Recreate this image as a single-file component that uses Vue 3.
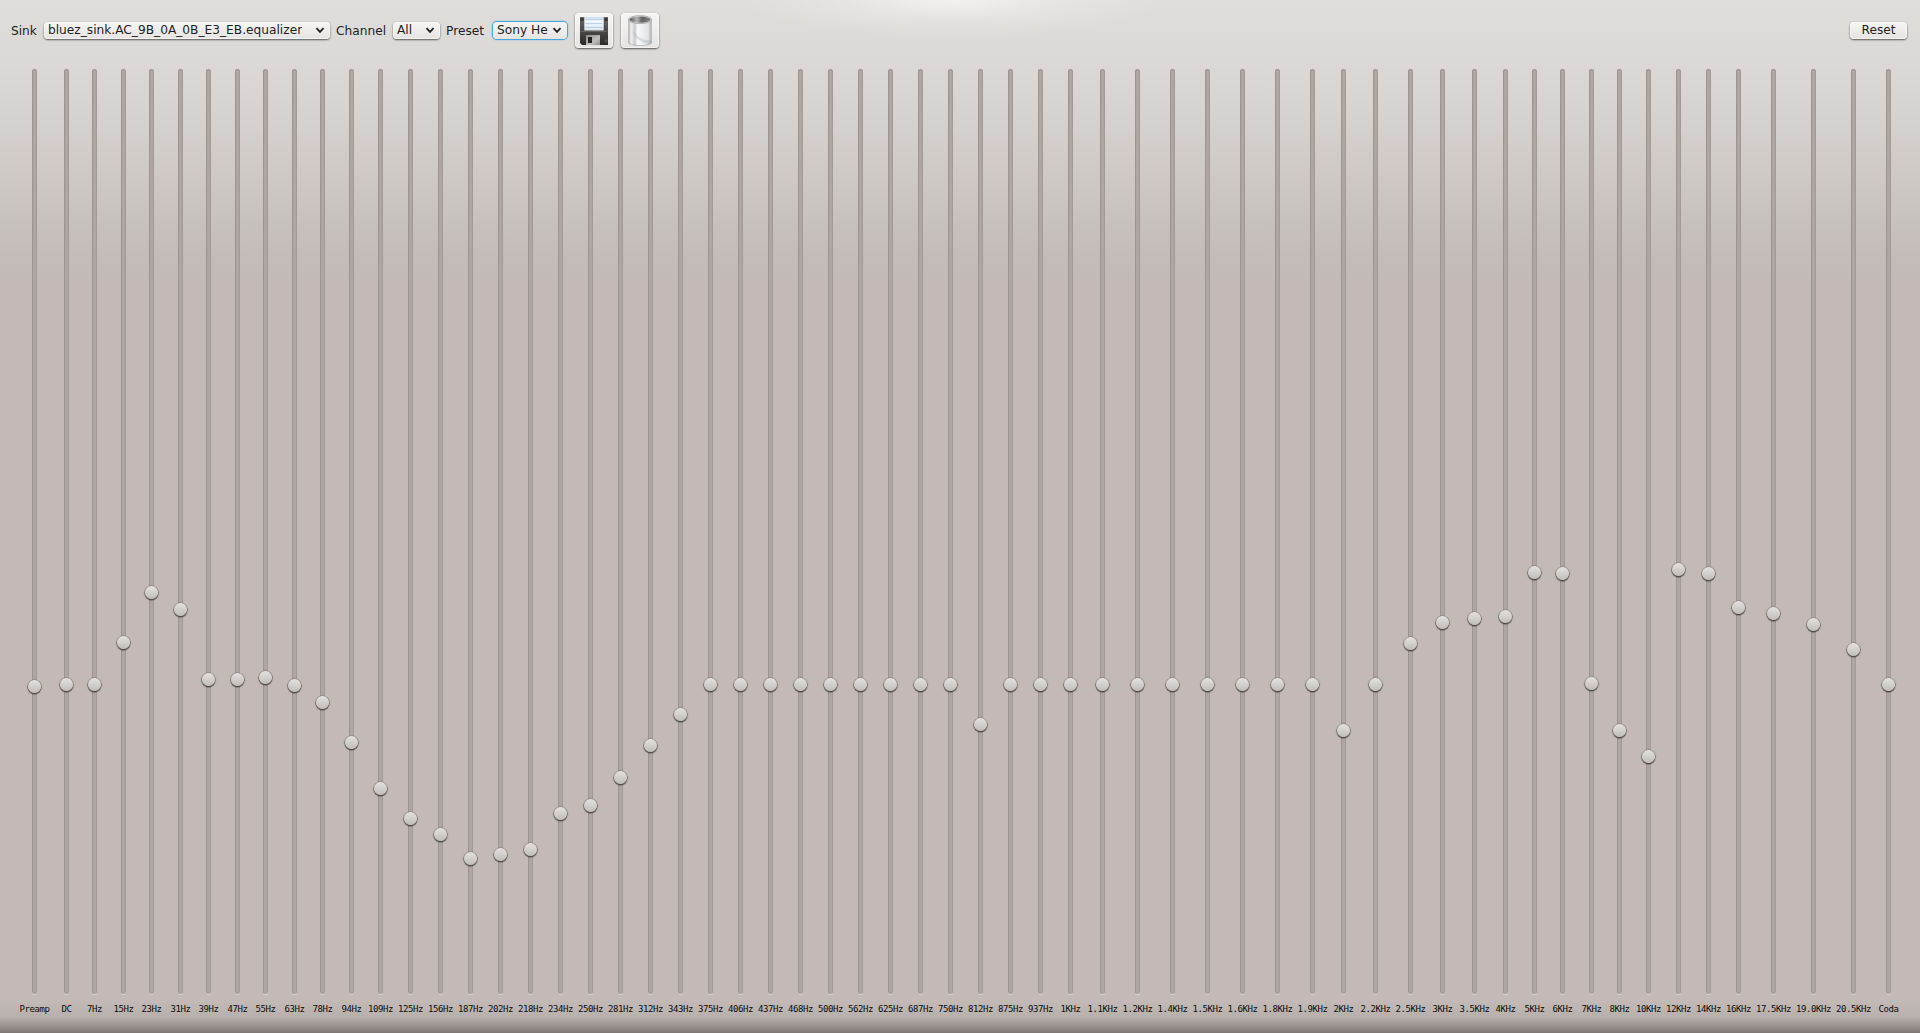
<script setup>
import { computed, ref } from 'vue'

const sink = ref('bluez_sink.AC_9B_0A_0B_E3_EB.equalizer')
const channel = ref('All')
const preset = ref('Sony He')

// label, x of the slider, offset of the knob from the top of the track
const bands = ref([
  ['Preamp', 34, 617], ['DC', 66, 615], ['7Hz', 94, 615], ['15Hz', 123, 573],
  ['23Hz', 151, 523], ['31Hz', 180, 540], ['39Hz', 208, 610], ['47Hz', 237, 610],
  ['55Hz', 265, 608], ['63Hz', 294, 616], ['78Hz', 322, 633], ['94Hz', 351, 673],
  ['109Hz', 380, 719], ['125Hz', 410, 749], ['156Hz', 440, 765], ['187Hz', 470, 789],
  ['202Hz', 500, 785], ['218Hz', 530, 780], ['234Hz', 560, 744], ['250Hz', 590, 736],
  ['281Hz', 620, 708], ['312Hz', 650, 676], ['343Hz', 680, 645], ['375Hz', 710, 615],
  ['406Hz', 740, 615], ['437Hz', 770, 615], ['468Hz', 800, 615], ['500Hz', 830, 615],
  ['562Hz', 860, 615], ['625Hz', 890, 615], ['687Hz', 920, 615], ['750Hz', 950, 615],
  ['812Hz', 980, 655], ['875Hz', 1010, 615], ['937Hz', 1040, 615], ['1KHz', 1070, 615],
  ['1.1KHz', 1102, 615], ['1.2KHz', 1137, 615], ['1.4KHz', 1172, 615], ['1.5KHz', 1207, 615],
  ['1.6KHz', 1242, 615], ['1.8KHz', 1277, 615], ['1.9KHz', 1312, 615], ['2KHz', 1343, 661],
  ['2.2KHz', 1375, 615], ['2.5KHz', 1410, 574], ['3KHz', 1442, 553], ['3.5KHz', 1474, 549],
  ['4KHz', 1505, 547], ['5KHz', 1534, 503], ['6KHz', 1562, 504], ['7KHz', 1591, 614],
  ['8KHz', 1619, 661], ['10KHz', 1648, 687], ['12KHz', 1678, 500], ['14KHz', 1708, 504],
  ['16KHz', 1738, 538], ['17.5KHz', 1773, 544], ['19.0KHz', 1813, 555], ['20.5KHz', 1853, 580],
  ['Coda', 1888, 615]
])

const sliders = computed(() => bands.value.map(([label, x, level], i) => ({
  label,
  level,
  gap: x - (i ? bands.value[i - 1][1] + 5 : 2)
})))

function reset() {
  bands.value = bands.value.map(([label, x]) => [label, x, 615])
}
</script>

<template>
  <div class="window">
    <div class="toolbar">
      <span class="caption sink-caption">Sink</span>
      <div class="combo sink">
        <span class="value">{{ sink }}</span>
        <svg class="arrow" viewBox="0 0 10 7"><path d="M1.5 1.2 5 4.9 8.5 1.2" /></svg>
      </div>
      <span class="caption channel-caption">Channel</span>
      <div class="combo channel">
        <span class="value">{{ channel }}</span>
        <svg class="arrow" viewBox="0 0 10 7"><path d="M1.5 1.2 5 4.9 8.5 1.2" /></svg>
      </div>
      <span class="caption preset-caption">Preset</span>
      <div class="combo preset">
        <span class="value">{{ preset }}</span>
        <svg class="arrow" viewBox="0 0 10 7"><path d="M1.5 1.2 5 4.9 8.5 1.2" /></svg>
      </div>
      <button class="tool save">
        <svg width="32" height="32" viewBox="0 0 32 32">
          <defs>
            <linearGradient id="disk" x1="0" y1="0" x2="0" y2="1">
              <stop offset="0" stop-color="#6b6867" />
              <stop offset="0.5" stop-color="#4a4747" />
              <stop offset="1" stop-color="#2b2929" />
            </linearGradient>
            <linearGradient id="paper" x1="0" y1="0" x2="0" y2="1">
              <stop offset="0" stop-color="#c9dcf0" />
              <stop offset="0.3" stop-color="#f2f7fc" />
              <stop offset="1" stop-color="#dbe7f3" />
            </linearGradient>
            <linearGradient id="shutter" x1="0" y1="0" x2="1" y2="1">
              <stop offset="0" stop-color="#8b8988" />
              <stop offset="0.6" stop-color="#c2c0bf" />
              <stop offset="1" stop-color="#8d8b8a" />
            </linearGradient>
          </defs>
          <path d="M2 2h28v28H4l-2-2z" fill="url(#disk)" />
          <path d="M2.5 3h3v3h-3zM26.5 3h3v3h-3z" fill="#383535" />
          <path d="M6.3 2h19.4v13.5H6.3z" fill="url(#paper)" />
          <path d="M7.5 4.5h17M7.5 8.5h17M7.5 12.5h17" stroke="#b2c8df" stroke-width="0.8" />
          <path d="M2.5 16.5h27" stroke="#777472" stroke-width="0.6" />
          <path d="M8 20h14v10H8z" fill="url(#shutter)" />
          <path d="M10 22h4v6h-4z" fill="#242222" />
          <circle cx="28" cy="26" r="1.2" fill="none" stroke="#6b6867" stroke-width="0.6" />
        </svg>
      </button>
      <button class="tool remove">
        <svg width="32" height="32" viewBox="0 0 32 32">
          <defs>
            <linearGradient id="can">
              <stop offset="0" stop-color="#a5a7aa" />
              <stop offset="0.12" stop-color="#f0f1f2" />
              <stop offset="0.28" stop-color="#c9cbce" />
              <stop offset="0.4" stop-color="#f7f8f9" />
              <stop offset="0.85" stop-color="#e2e4e6" />
              <stop offset="1" stop-color="#a7a9ac" />
            </linearGradient>
            <linearGradient id="hole">
              <stop offset="0" stop-color="#555" />
              <stop offset="0.35" stop-color="#b5b5b5" />
              <stop offset="0.6" stop-color="#626262" />
              <stop offset="1" stop-color="#858585" />
            </linearGradient>
          </defs>
          <path d="M4.3 4.5v23c0 5 23.400 5 23.400 0v-23z" fill="url(#can)" />
          <path d="M8 15c3 9 9 12 17 14 2-.8 2.700-1.300 2.700-2V25c-8 1-14-2-19.700-10z" fill="#8c9196" opacity="0.25" />
          <path d="M4.300 26.500c0 5.500 23.400 5.500 23.400 0" fill="none" stroke="#aaa" stroke-width="0.7" />
          <ellipse cx="16" cy="4.600" rx="11.700" ry="4" fill="#dcdddd" stroke="#8d8e8f" stroke-width="0.6" />
          <ellipse cx="16" cy="4.600" rx="10.600" ry="3.100" fill="url(#hole)" />
        </svg>
      </button>
      <button class="reset" @click="reset">Reset</button>
    </div>

    <div class="sliders">
      <div v-for="s in sliders" :key="s.label" class="band" :style="{ marginLeft: s.gap + 'px' }">
        <div class="track">
          <div class="knob" :style="{ top: s.level + 'px' }"></div>
        </div>
        <span class="label">{{ s.label }}</span>
      </div>
    </div>
  </div>
</template>

<style>
body {
  margin: 0;
  overflow: hidden;
}
</style>

<style scoped>
.window {
  display: flex;
  flex-direction: column;
  width: 1920px;
  height: 1033px;
  box-sizing: border-box;
  overflow: hidden;
  font-family: "DejaVu Sans", sans-serif;
  font-size: 12.2px;
  color: #221f1e;
  background:
    radial-gradient(ellipse 210px 38px at 953px 0, rgba(255, 255, 255, 0.6), rgba(255, 255, 255, 0.2) 50%, rgba(255, 255, 255, 0)),
    linear-gradient(to top, #7d7673 0, rgba(140, 133, 128, 0.75) 7px, rgba(165, 160, 154, 0.4) 16px, rgba(190, 184, 178, 0) 32px),
    linear-gradient(#dfdedc 0, #dbd8d5 65px, #d4d0cd 130px, #cac5c1 200px, #c3bcb8 255px, #c3bab7 280px);
}

.toolbar {
  display: flex;
  align-items: flex-start;
  height: 69px;
  padding: 0 13px 0 11px;
  box-sizing: border-box;
}

.caption {
  flex: none;
  margin-top: 23px;
  line-height: 16px;
  white-space: nowrap;
}

.sink-caption { width: 33px; }
.sink { width: 286px; }
.channel-caption { width: 57px; margin-left: 6px; }
.channel { width: 47px; }
.preset-caption { width: 47px; margin-left: 6px; }
.preset { width: 74px; }

.combo,
.tool,
.reset {
  flex: none;
  box-sizing: border-box;
  border: 0;
  border-radius: 4px;
  background: linear-gradient(#f5f5f4, #e6e4e2);
  box-shadow: 0 1px 2px rgba(0, 0, 0, 0.6), 0 0 1px rgba(0, 0, 0, 0.25), inset 0 0 0 1px rgba(255, 255, 255, 0.5);
}

.combo {
  display: flex;
  align-items: center;
  justify-content: space-between;
  height: 17px;
  margin-top: 22px;
  padding: 0 5px 0 4px;
}

.value {
  overflow: hidden;
  padding-bottom: 1px;
  line-height: 16px;
  white-space: nowrap;
}

.preset {
  box-shadow: 0 0 0 1px #45a4d8, 0 0 2px 1px rgba(69, 164, 216, 0.6);
}

.arrow {
  flex: none;
  width: 10px;
  height: 7px;
  fill: none;
  stroke: #221f1e;
  stroke-width: 1.8;
}

.tool {
  display: flex;
  align-items: center;
  justify-content: center;
  width: 38px;
  height: 35px;
  margin: 13px 0 0 8px;
  padding: 0;
}

.reset {
  width: 57px;
  height: 17px;
  margin: 22px 0 0 auto;
  padding: 0;
  font: inherit;
  line-height: 17px;
  color: inherit;
}

.sliders {
  display: flex;
}

.band {
  display: flex;
  flex: none;
  flex-direction: column;
  align-items: center;
  width: 5px;
}

.track {
  position: relative;
  width: 5px;
  height: 925px;
  box-sizing: border-box;
  border: 1px solid #9b9491;
  border-right-color: #a19a97;
  border-bottom-color: #a8a19e;
  border-radius: 3px;
  background: #aea6a3;
  box-shadow: 0 1px 0 rgba(255, 255, 255, 0.4);
}

.knob {
  position: absolute;
  left: -5px;
  width: 13px;
  height: 13px;
  margin-top: -7px;
  border-radius: 50%;
  background: linear-gradient(#e4e2df, #c0bdb9);
  box-shadow: 0 1px 1px 0.5px rgba(0, 0, 0, 0.5), 0 0 1px 0.5px rgba(0, 0, 0, 0.25);
}

.label {
  margin-top: 9px;
  font-family: "DejaVu Sans Mono", monospace;
  font-size: 9px;
  letter-spacing: -0.42px;
  line-height: 12px;
  color: #0d0c0b;
  white-space: nowrap;
}
</style>
